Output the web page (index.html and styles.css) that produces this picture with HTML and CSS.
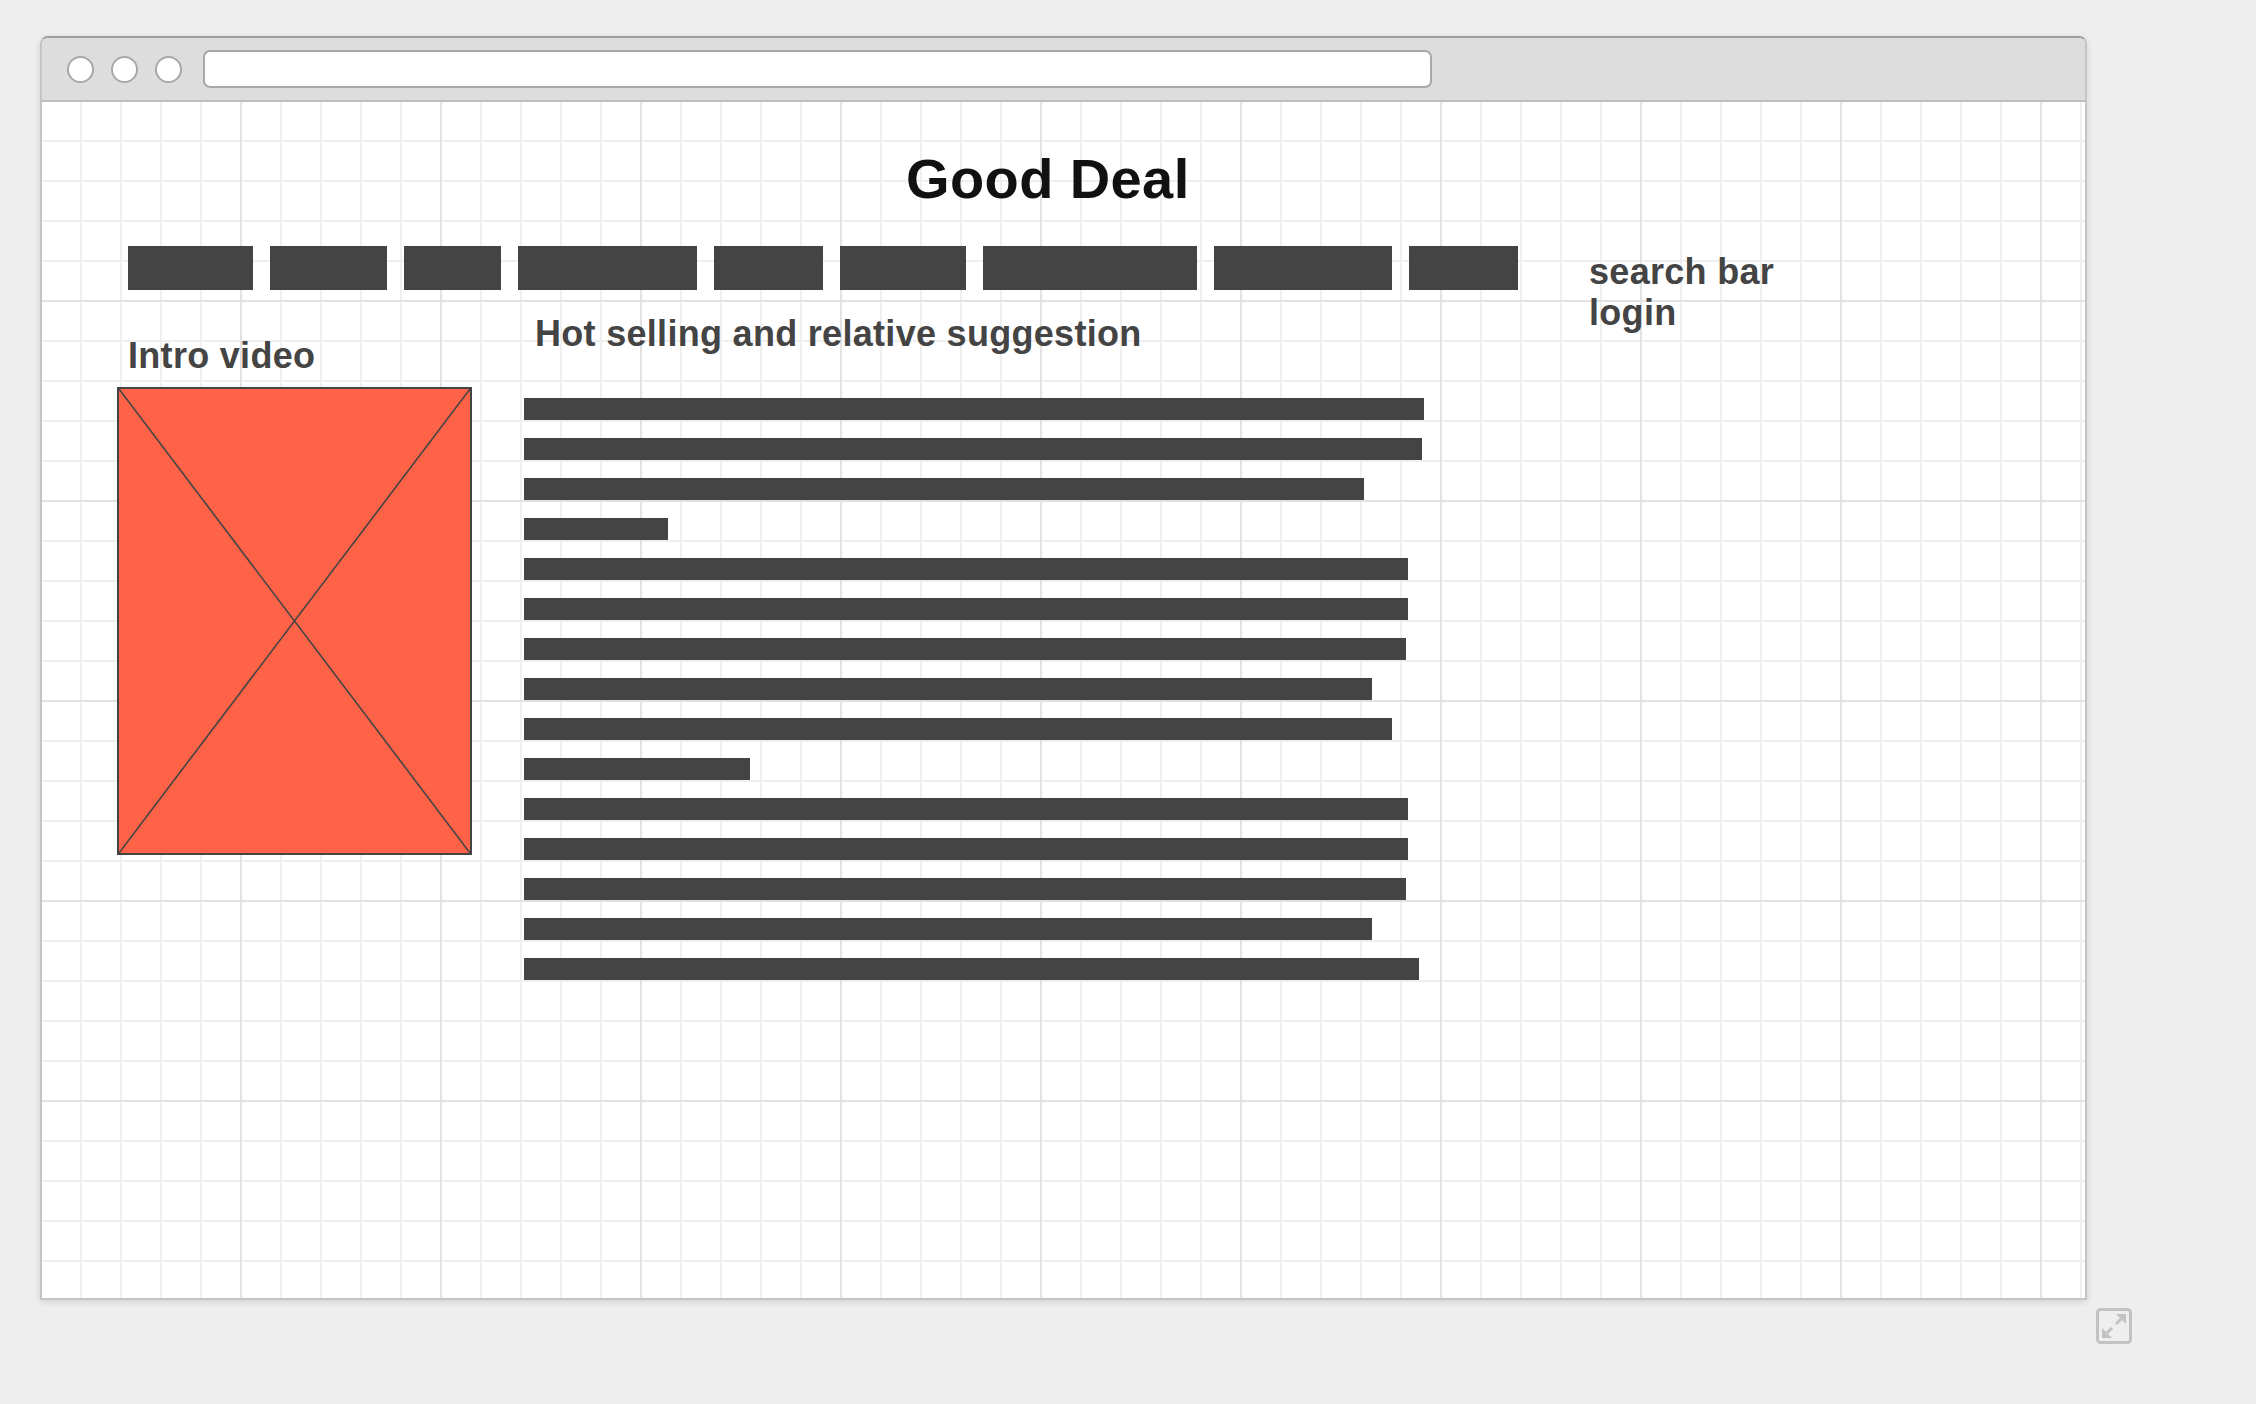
FILE: index.html
```html
<!DOCTYPE html>
<html lang="en">
<head>
<meta charset="utf-8">
<title>Good Deal wireframe</title>
<link rel="stylesheet" href="styles.css">
</head>
<body>
<div class="page">
  <div class="window">
    <div class="titlebar">
      <span class="dot"></span>
      <span class="dot"></span>
      <span class="dot"></span>
      <div class="address"></div>
    </div>
    <div class="canvas">
      <h1 class="title">Good Deal</h1>
      <div class="main">
        <div class="left">
          <div class="nav">
            <span class="nav-item" style="width:125px"></span>
            <span class="nav-item" style="width:117px"></span>
            <span class="nav-item" style="width:97px"></span>
            <span class="nav-item" style="width:179px"></span>
            <span class="nav-item" style="width:109px"></span>
            <span class="nav-item" style="width:126px"></span>
            <span class="nav-item" style="width:214px"></span>
            <span class="nav-item" style="width:178px"></span>
            <span class="nav-item" style="width:109px"></span>
          </div>
          <div class="body">
            <div class="video-col">
              <div class="label">Intro video</div>
              <div class="video">
                <svg class="video-x" viewBox="0 0 100 100" preserveAspectRatio="none">
                  <line x1="0" y1="0" x2="100" y2="100" vector-effect="non-scaling-stroke"/>
                  <line x1="100" y1="0" x2="0" y2="100" vector-effect="non-scaling-stroke"/>
                </svg>
              </div>
            </div>
            <div class="text-col">
              <div class="label">Hot selling and relative suggestion</div>
              <div class="lines">
                <span class="line" style="width:900px"></span>
                <span class="line" style="width:898px"></span>
                <span class="line" style="width:840px"></span>
                <span class="line" style="width:144px"></span>
                <span class="line" style="width:884px"></span>
                <span class="line" style="width:884px"></span>
                <span class="line" style="width:882px"></span>
                <span class="line" style="width:848px"></span>
                <span class="line" style="width:868px"></span>
                <span class="line" style="width:226px"></span>
                <span class="line" style="width:884px"></span>
                <span class="line" style="width:884px"></span>
                <span class="line" style="width:882px"></span>
                <span class="line" style="width:848px"></span>
                <span class="line" style="width:895px"></span>
              </div>
            </div>
          </div>
        </div>
        <div class="side">
          <div class="side-item">search bar</div>
          <div class="side-item">login</div>
        </div>
      </div>
    </div>
  </div>
  <div class="below">
    <svg class="resize" width="36" height="36" viewBox="0 0 36 36">
      <rect x="1.5" y="1.5" width="33" height="33" rx="3" ry="3" fill="none" stroke="#c2c2c2" stroke-width="3"/>
      <polygon points="20,6 30,6 30,16" fill="#c2c2c2"/>
      <line x1="25" y1="11" x2="20" y2="16" stroke="#c2c2c2" stroke-width="3"/>
      <polygon points="6,20 6,30 16,30" fill="#c2c2c2"/>
      <line x1="11" y1="25" x2="16" y2="20" stroke="#c2c2c2" stroke-width="3"/>
    </svg>
  </div>
</div>
</body>
</html>
```
FILE: styles.css
```css
html, body {
  margin: 0;
  padding: 0;
  background: #eeeeee;
}

.page {
  width: 2256px;
  height: 1404px;
  overflow: hidden;
  font-family: "Liberation Sans", Arial, Helvetica, sans-serif;
}

.window {
  margin: 36px 0 0 40px;
  width: 2047px;
  height: 1264px;
  box-sizing: border-box;
  border: 2px solid #c4c4c4;
  border-top-color: #9e9e9e;
  border-radius: 8px 8px 0 0;
  box-shadow: 0 2px 7px rgba(0, 0, 0, 0.12);
  display: flex;
  flex-direction: column;
  background: #ffffff;
}

.titlebar {
  height: 62px;
  flex: none;
  background: #dddddd;
  border-bottom: 2px solid #bdbdbd;
  border-radius: 6px 6px 0 0;
  display: flex;
  align-items: center;
  padding-left: 25px;
}

.dot {
  width: 23px;
  height: 23px;
  border: 2px solid #a8a8a8;
  border-radius: 50%;
  background: #ffffff;
  margin-right: 17px;
  flex: none;
}

.address {
  margin-left: 4px;
  width: 1225px;
  height: 34px;
  border: 2px solid #a8a8a8;
  border-radius: 7px;
  background: #ffffff;
}

.canvas {
  flex: 1;
  padding-top: 45px;
  background-color: #ffffff;
  background-image:
    linear-gradient(to right, transparent 198px, #e2e2e2 198px),
    linear-gradient(to bottom, transparent 198px, #e2e2e2 198px),
    linear-gradient(to right, transparent 38px, #efefef 38px),
    linear-gradient(to bottom, transparent 38px, #efefef 38px);
  background-size: 200px 200px, 200px 200px, 40px 40px, 40px 40px;
}

.title {
  margin: 0 0 0 864px;
  font-size: 56px;
  line-height: 64px;
  font-weight: bold;
  letter-spacing: 0.4px;
  color: #111111;
}

.main {
  margin-top: 35px;
  display: flex;
  align-items: flex-start;
  padding-left: 75px;
}

.left {
  display: flex;
  flex-direction: column;
}

.nav {
  display: flex;
  gap: 17px;
  margin-left: 11px;
}

.nav-item {
  display: block;
  height: 44px;
  background: #444444;
}

.body {
  display: flex;
  margin-top: 23px;
}

.label {
  font-size: 36px;
  line-height: 41px;
  font-weight: bold;
  letter-spacing: 0.3px;
  color: #444444;
  margin-left: 11px;
  white-space: nowrap;
}

.video-col {
  padding-top: 22px;
}

.video {
  margin-top: 11px;
  width: 351px;
  height: 464px;
  border: 2px solid #444444;
  background: #ff6347;
}

.video-x {
  display: block;
  width: 100%;
  height: 100%;
}

.video-x line {
  stroke: #444444;
  stroke-width: 1.6;
}

.text-col {
  margin-left: 52px;
}

.lines {
  margin-top: 44px;
  display: flex;
  flex-direction: column;
  gap: 18px;
}

.line {
  display: block;
  height: 22px;
  background: #444444;
}

.side {
  margin-left: 71px;
  margin-top: 5px;
}

.side-item {
  font-size: 36px;
  line-height: 41px;
  font-weight: bold;
  letter-spacing: 0.3px;
  color: #444444;
  white-space: nowrap;
}

.below {
  padding: 8px 0 0 2096px;
}

.resize {
  display: block;
}
```
